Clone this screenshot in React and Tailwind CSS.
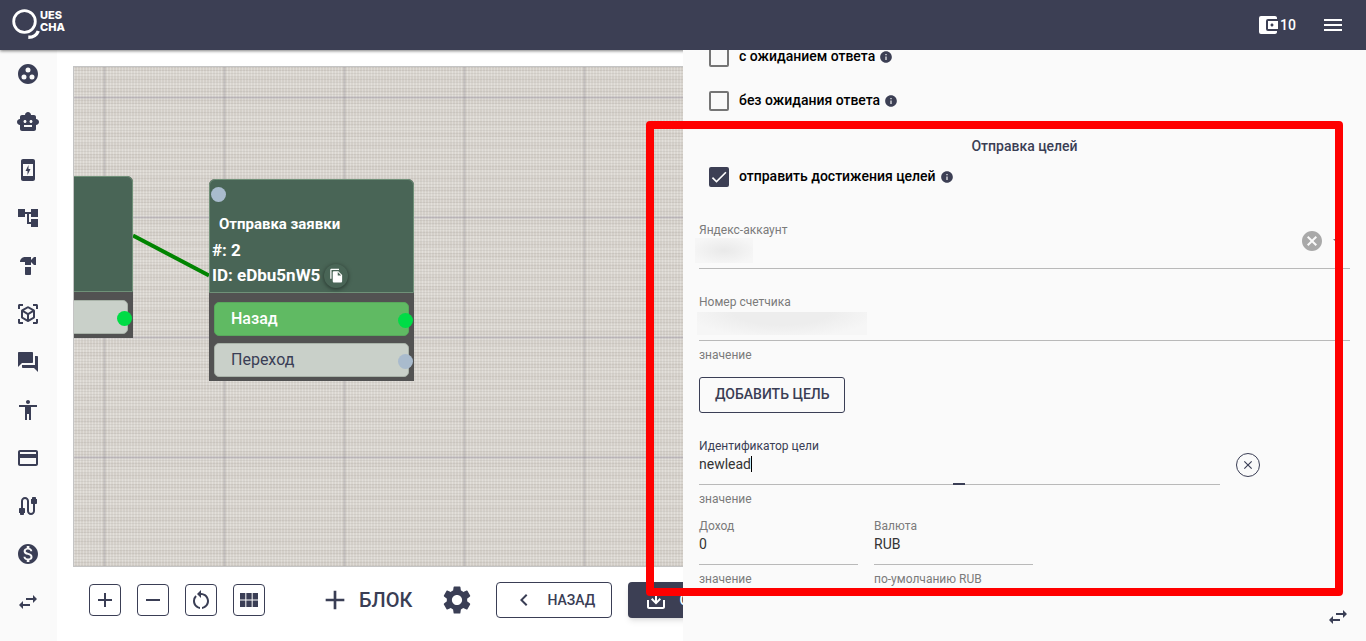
import React, { useState } from 'react';
import {
  MdAccessibility,
  MdAccountBalanceWallet,
  MdAccountTree,
  MdAdd,
  MdArrowDropDown,
  MdCable,
  MdCancel,
  MdChargingStation,
  MdCheck,
  MdChevronLeft,
  MdClose,
  MdCreditCard,
  MdFileCopy,
  MdGroupWork,
  MdHardware,
  MdInfo,
  MdMenu,
  MdMonetizationOn,
  MdQuestionAnswer,
  MdRemove,
  MdRestartAlt,
  MdSaveAlt,
  MdSettings,
  MdSmartToy,
  MdSwapHoriz,
  MdViewInAr,
  MdViewModule,
} from 'react-icons/md';

const menuItems = [
  { icon: MdGroupWork, label: 'Проекты' },
  { icon: MdSmartToy, label: 'Боты' },
  { icon: MdChargingStation, label: 'Каналы' },
  { icon: MdAccountTree, label: 'Сценарии' },
  { icon: MdHardware, label: 'Инструменты' },
  { icon: MdViewInAr, label: 'Модули' },
  { icon: MdQuestionAnswer, label: 'Диалоги' },
  { icon: MdAccessibility, label: 'Клиенты' },
  { icon: MdCreditCard, label: 'Оплата' },
  { icon: MdCable, label: 'Интеграции' },
  { icon: MdMonetizationOn, label: 'Партнёры' },
  { icon: MdSwapHoriz, label: 'Развернуть' },
];

const zoomTools = [
  { icon: MdAdd, label: 'Приблизить' },
  { icon: MdRemove, label: 'Отдалить' },
  { icon: MdRestartAlt, label: 'Сбросить' },
  { icon: MdViewModule, label: 'Сетка' },
];

const Logo = () => (
  <a href="#home" aria-label="Quescha" className="flex items-start text-white">
    <svg width="28" height="32" viewBox="0 0 28 32" fill="none" stroke="currentColor">
      <circle cx="12.5" cy="12.5" r="10.8" strokeWidth="2.8" />
      <path d="M16.3 28.3c4.800 0 8.400-2.200 10-6.300" strokeWidth="3.4" />
    </svg>
    <span className="font-['Inter'] text-[11px] font-extrabold leading-3">
      <span className="block">UES</span>
      <span className="block">CHA</span>
    </span>
  </a>
);

const Header = () => (
  <header className="relative z-10 flex h-[50px] shrink-0 items-center justify-between bg-[#3c3f54] pl-3 pr-[21px] text-white shadow-[0_1px_3px_rgba(0,0,0,0.5)]">
    <Logo />
    <div className="flex items-center gap-[25px]">
      <a href="#balance" className="flex items-center text-sm font-medium">
        <MdAccountBalanceWallet size={24} />
        10
      </a>
      <button type="button" aria-label="Меню">
        <MdMenu size={24} />
      </button>
    </div>
  </header>
);

const Sidebar = () => (
  <nav className="flex w-[57px] shrink-0 flex-col bg-[#fafafa] pr-px">
    {menuItems.map(({ icon: Icon, label }) => (
      <a key={label} href="#menu" aria-label={label} className="flex h-12 items-center justify-center">
        <Icon size={24} />
      </a>
    ))}
  </nav>
);

const Dot = ({ className }) => <span className={`absolute size-[15px] rounded-full ${className}`} />;

const NodeOption = ({ children, active }) => (
  <div
    className={
      active
        ? 'relative flex h-[34px] items-center rounded-[5px] border border-[#58a85c] bg-[#60ba63] pl-4 font-medium text-white'
        : 'relative flex h-[34px] items-center rounded-[5px] border border-[#a9b3a9] bg-[#c9d0c9] pl-4'
    }
  >
    {children}
    <Dot className={active ? '-right-[5px] top-[10px] bg-[#00dc46]' : '-right-[5px] top-[10px] bg-[#a9bbcd]'} />
  </div>
);

const Canvas = () => (
  <div className="relative min-h-0 flex-1 overflow-hidden border border-r-0 border-[#c4c4c4] bg-[#dad6d0]">
    {/* linen texture */}
    <div className="absolute inset-0 bg-[repeating-linear-gradient(0deg,rgba(110,105,100,0.1)_0_1px,transparent_1px_3px),repeating-linear-gradient(90deg,rgba(255,255,255,0.24)_0_1px,transparent_1px_3px),repeating-linear-gradient(0deg,rgba(120,105,90,0.06)_0_5px,transparent_5px_11px)]" />
    {/* grid */}
    <div className="absolute inset-0 bg-[linear-gradient(90deg,transparent_29px,rgba(110,105,115,0.24)_30px_31px,transparent_32px),linear-gradient(180deg,transparent_29px,rgba(110,100,130,0.24)_30px_31px,transparent_32px)] bg-[length:120px_120px]" />

    <div className="absolute -left-[146px] top-[109px] w-[205px] rounded-tr-md bg-[#525252]">
      <div className="h-[116px] rounded-tr-md border border-[#6f9078] bg-[#496556]" />
      <div className="px-[5px] pb-1 pt-2">
        <div className="relative h-[34px] rounded-[5px] border border-[#a9b3a9] bg-[#c9d0c9]">
          <Dot className="-right-[5px] top-[10px] bg-[#00dc46]" />
        </div>
      </div>
    </div>

    <svg className="absolute left-[59px] top-[166px]" width="78" height="48" fill="none">
      <path d="M0 2.500 76 42.500" stroke="#008400" strokeWidth="4" />
    </svg>

    <div className="absolute left-[135px] top-[112px] w-[205px] rounded-t-md bg-[#525252]">
      <div className="relative h-[114px] rounded-t-md border border-[#6f9078] bg-[#496556] pl-[2px] pt-[30px] text-[17px] font-bold text-white">
        <Dot className="left-[1px] top-[7px] bg-[#a9bbcd]" />
        <div className="pl-[7px] text-[15px] leading-7">Отправка заявки</div>
        <div className="leading-[25px]">#: 2</div>
        <div className="flex items-center gap-1 leading-[25px]">
          ID: eDbu5nW5
          <button
            type="button"
            aria-label="Скопировать"
            className="flex size-6 items-center justify-center rounded-full shadow-[0_1px_4px_rgba(0,0,0,0.5)]"
          >
            <MdFileCopy size={15} />
          </button>
        </div>
      </div>
      <div className="flex flex-col gap-[7px] px-[5px] pb-1 pt-[9px]">
        <NodeOption active>Назад</NodeOption>
        <NodeOption>Переход</NodeOption>
      </div>
    </div>
  </div>
);

const Toolbar = () => (
  <div className="flex h-[74px] shrink-0 items-center pb-2 pl-4">
    <div className="flex gap-4">
      {zoomTools.map(({ icon: Icon, label }) => (
        <button
          key={label}
          type="button"
          aria-label={label}
          className="flex size-8 items-center justify-center rounded border border-[#3a3e55]"
        >
          <Icon size={24} />
        </button>
      ))}
    </div>
    <button type="button" className="ml-[54px] flex shrink-0 items-center gap-2 text-xl font-medium">
      <MdAdd size={32} />
      БЛОК
    </button>
    <button type="button" aria-label="Настройки" className="ml-7 shrink-0">
      <MdSettings size={34} />
    </button>
    <button
      type="button"
      className="ml-[22px] flex h-9 w-[116px] shrink-0 items-center gap-[11px] rounded border border-[#3a3e55] pl-[15px] text-sm font-medium"
    >
      <MdChevronLeft size={24} />
      НАЗАД
    </button>
    <button
      type="button"
      className="ml-4 flex h-9 shrink-0 items-center gap-[11px] rounded bg-[#3c3f54] px-4 text-sm font-medium text-white shadow-md"
    >
      <MdSaveAlt size={24} />
      СОХРАНИТЬ
    </button>
  </div>
);

const CheckboxRow = ({ children, defaultChecked }) => (
  <label className="flex h-11 items-center gap-[10px] pl-[10px] text-sm font-medium text-black">
    <span className="grid">
      <input
        type="checkbox"
        defaultChecked={defaultChecked}
        className="peer col-start-1 row-start-1 size-5 appearance-none rounded-[2px] border-2 border-[#757575] checked:border-[#3c3f54] checked:bg-[#3c3f54]"
      />
      <MdCheck size={20} className="pointer-events-none col-start-1 row-start-1 hidden text-white peer-checked:block" />
    </span>
    <span className="flex items-center gap-1">
      <span className="pb-[2px]">{children}</span>
      <MdInfo size={14} className="text-[#3c3f54]" />
    </span>
  </label>
);

const Field = ({ id, label, hint, value, onChange, focused, className, children }) => (
  <div className={className}>
    <label htmlFor={id} className={focused ? 'block text-xs text-[#3a3e55]' : 'block text-xs text-[#7b7b7b]'}>
      {label}
    </label>
    <div className="relative border-b border-[#b9b9b9]">
      <input
        id={id}
        value={value}
        onChange={onChange}
        className="block h-[30px] w-full bg-transparent pb-[10px] text-sm text-[#333333] outline-none"
      />
      {children}
    </div>
    {hint && <p className="mt-[6px] text-xs text-[#7b7b7b]">{hint}</p>}
  </div>
);

const GoalsPanel = () => {
  const [form, setForm] = useState({ account: '', counter: '', goal: 'newlead', income: '0', currency: 'RUB' });
  const bind = (name) => ({
    id: name,
    value: form[name],
    onChange: (e) => setForm({ ...form, [name]: e.target.value }),
  });

  return (
    <aside className="relative z-20 flex w-1/2 shrink-0 flex-col bg-[#fafafa]">
      <div className="flex min-h-0 flex-1 flex-col overflow-hidden px-4 pb-3">
        <form className="-mt-[15px]">
          <CheckboxRow>с ожиданием ответа</CheckboxRow>
          <CheckboxRow>без ожидания ответа</CheckboxRow>
          <h2 className="mt-[13px] text-center text-sm font-medium">Отправка целей</h2>
          <div className="-mt-px">
            <CheckboxRow defaultChecked>отправить достижения целей</CheckboxRow>
          </div>

          <Field {...bind('account')} label="Яндекс-аккаунт" className="mt-[23px]">
            <span className="absolute -left-1 top-0 h-[25px] w-[58px] bg-[radial-gradient(ellipse_at_center,#e9e9e9,#f6f6f6_80%)]" />
            <div className="absolute -top-[9px] right-0 flex items-center">
              <button type="button" aria-label="Очистить" className="mr-[2px] text-[#a9a9a9]">
                <MdCancel size={24} />
              </button>
              <MdArrowDropDown size={24} className="text-[#757575]" />
            </div>
          </Field>

          <Field {...bind('counter')} label="Номер счетчика" hint="значение" className="mt-[25px]">
            <span className="absolute -left-[2px] top-[2px] h-[23px] w-[170px] bg-[radial-gradient(ellipse_at_top,#ededed_40%,#f6f6f6_80%)]" />
          </Field>

          <button
            type="button"
            className="mt-[14px] h-9 rounded-[3px] border border-[#3a3e55] px-[15px] pb-[2px] text-sm font-medium"
          >
            ДОБАВИТЬ ЦЕЛЬ
          </button>

          <div className="mt-[25px] flex items-start gap-4">
            <Field {...bind('goal')} label="Идентификатор цели" hint="значение" focused className="w-4/5">
              <span className="absolute left-[52px] top-[2px] h-4 w-px bg-black" />
              <span className="absolute -bottom-px left-1/2 h-[2px] w-3 -translate-x-1/2 bg-[#3a3e55]" />
            </Field>
            <button
              type="button"
              aria-label="Удалить цель"
              className="mt-[15px] flex size-6 items-center justify-center rounded-full border border-[#3a3e55]"
            >
              <MdClose size={14} />
            </button>
          </div>

          <div className="mt-[11px] flex gap-4">
            <Field {...bind('income')} label="Доход" hint="значение" className="w-[159px]" />
            <Field {...bind('currency')} label="Валюта" hint="по-умолчанию RUB" className="w-[159px]" />
          </div>
        </form>

        <button type="button" aria-label="Свернуть панель" className="mt-auto self-end">
          <MdSwapHoriz size={24} />
        </button>
      </div>

      {/* highlighted area */}
      <div className="pointer-events-none absolute -left-[37px] right-[23px] top-[71px] h-[475px] rounded border-8 border-[#ff0000]" />
    </aside>
  );
};

const App = () => (
  <div className="flex h-screen flex-col overflow-hidden bg-white font-['Roboto',sans-serif] text-[#3a3e55]">
    <Header />
    <div className="flex min-h-0 flex-1">
      <Sidebar />
      <main className="flex min-w-0 flex-1 flex-col overflow-hidden pl-4 pt-4">
        <Canvas />
        <Toolbar />
      </main>
      <GoalsPanel />
    </div>
  </div>
);

export default App;
